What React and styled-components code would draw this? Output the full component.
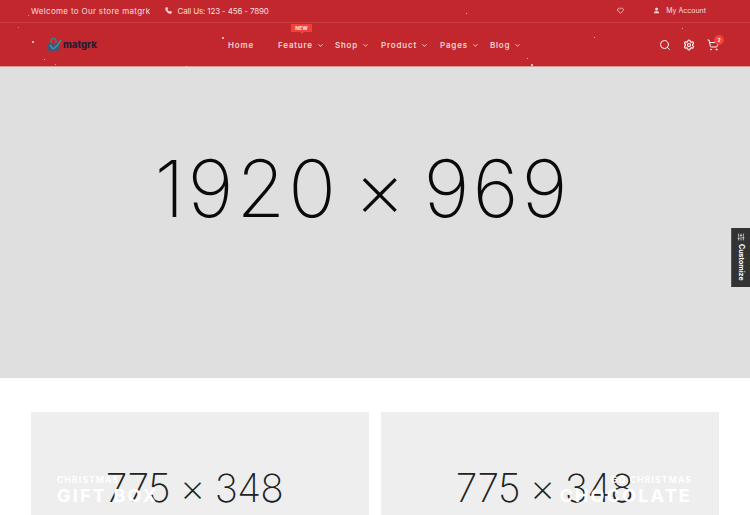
import React from "react";
import styled, { createGlobalStyle } from "styled-components";
import { Phone, Heart, User, Search, Settings, ShoppingCart, ChevronDown, SlidersHorizontal } from "lucide-react";

const Global = createGlobalStyle`
  html, body { margin: 0; padding: 0; background: #fff; }
  body { width: 750px; height: 515px; overflow: hidden; font-family: "Inter", "Liberation Sans", sans-serif; }
  * { box-sizing: border-box; }
`;
const Page = styled.div`position: relative; width: 750px; height: 515px; overflow: hidden;`;
const TopBar = styled.div`
  height: 23px; background: #c1272d; border-bottom: 1px solid #cc3d3f;
  display: flex; align-items: center; justify-content: space-between;
  padding: 0 44px 1px 31px; color: #f6dfe0; font-size: 8px;
`;
const TopGroup = styled.div`display: flex; align-items: center; gap: ${p => p.$gap}px;`;
const Welcome = styled.span`letter-spacing: .32px;`;
const CallItem = styled.span`display: inline-flex; align-items: center; gap: 6px; letter-spacing: -.15px;`;
const AccountItem = styled.span`display: inline-flex; align-items: center; gap: 6px; font-size: 7px;`;
const Header = styled.header`
  height: 44px; background: #c1272d; border-bottom: 1px solid #d9999b;
  display: grid; grid-template-columns: 228px 1fr auto; align-items: center;
  padding: 0 31px 0 0; color: #f7e3e3;
`;
const Logo = styled.div`display: flex; align-items: center; gap: 1px; padding-left: 47px;`;
const LogoText = styled.span`font: 800 9.5px "Inter", sans-serif; color: #221f33;`;
const Nav = styled.nav`display: flex; align-items: center; font-size: 8px; font-weight: 500; letter-spacing: .85px; padding-top: 1px;`;
const NavItem = styled.span`
  position: relative; display: inline-flex; align-items: center; gap: 4px;
  margin-right: ${p => p.$gap}px; white-space: nowrap;
`;
const NewBadge = styled.span`
  position: absolute; left: 13px; top: -16px; width: 21px; height: 8px; background: #f0413d; color: #fff;
  font-size: 5px; font-weight: 600; letter-spacing: .2px; display: flex; align-items: center; justify-content: center;
  &::after {
    content: ""; position: absolute; left: 50%; bottom: -2px; margin-left: -2px;
    border: 2px solid transparent; border-bottom: 0; border-top-color: #f0413d;
  }
`;
const Icons = styled.div`display: flex; align-items: center; gap: 12px; color: #fff;`;
const CartWrap = styled.span`position: relative; display: inline-flex;`;
const CartBadge = styled.span`
  position: absolute; right: -5px; top: -4px; width: 10px; height: 10px; border-radius: 50%;
  background: #f0413d; color: #fff; font-size: 5px; font-weight: 700; display: flex; align-items: center; justify-content: center;
`;
const Hero = styled.div`
  height: 311px; background: #dfdfdf; color: #0a0a0a; display: flex; align-items: center; justify-content: center;
  font: 200 79px "Inter", sans-serif; letter-spacing: 3px; word-spacing: -10px; padding: 0 25px 69px 0; white-space: nowrap;
`;
const Banners = styled.section`display: grid; grid-template-columns: 338px 338px; gap: 12px; padding: 34px 31px 0;`;
const Banner = styled.div`
  position: relative; height: 120px; background: #eeeeee; overflow: hidden; color: #222;
  font: 200 39px "Inter", sans-serif; letter-spacing: -.7px; white-space: nowrap;
  display: flex; justify-content: center; padding: 49px 11px 0 0; line-height: 54px;
`;
const Caption = styled.div`
  position: absolute; top: 63px; ${p => p.$right ? "right: 27px; text-align: right;" : "left: 26px;"}
  color: #fff; font-family: "Inter", sans-serif;
`;
const Small = styled.div`font-size: 8.5px; font-weight: 700; letter-spacing: 1.2px; line-height: 11px;`;
const Big = styled.div`font-size: 18px; font-weight: 700; letter-spacing: 2.2px; line-height: 22px; margin-top: -1px;`;
const Customize = styled.div`
  position: absolute; right: 0; top: 228px; width: 19px; height: 59px; background: #333; border-left: 1px solid #555;
  color: #fff; display: flex; flex-direction: column; align-items: center; gap: 3px; padding-top: 5px;
`;
const CustomizeText = styled.span`writing-mode: vertical-rl; font-size: 7px; font-weight: 700; line-height: 10px;`;
const Flake = styled.i`position: absolute; width: ${p => p.$s}px; height: ${p => p.$s}px; border-radius: 50%; background: #fff; opacity: ${p => p.$o};`;

const flakes = [[28,15,1,.7],[18,27,1,.5],[32,41,2,.9],[44,59,1,.9],[55,64,1,.7],[186,66,1,.8],[222,37,2,.9],[466,13,1,.9],[527,58,1,.9],[682,28,1,.8],[594,37,1,.8],[531,64,2,.9],[36,115,1,.5],[68,128,1,.5],[115,275,1,.5],[75,338,1,.4],[437,385,1,.6],[620,384,1,.6],[160,160,1,.5],[192,185,1,.5],[323,203,1,.5],[589,231,1,.6],[542,258,1,.4],[250,380,1,.4]];
const navs = [["Home",false,24],["Feature",true,11],["Shop",true,12],["Product",true,12],["Pages",true,11],["Blog",true,0]];

export default function App() {
  return (
    <Page>
      <Global />
      <TopBar>
        <TopGroup $gap={14}>
          <Welcome>Welcome to Our store matgrk</Welcome>
          <CallItem><Phone size={7} fill="currentColor" />Call Us: 123 - 456 - 7890</CallItem>
        </TopGroup>
        <TopGroup $gap={29}>
          <Heart size={7} strokeWidth={2.5} />
          <AccountItem><User size={7} fill="currentColor" />My Account</AccountItem>
        </TopGroup>
      </TopBar>
      <Header>
        <Logo>
          <svg width="15" height="14" viewBox="0 0 15 14" fill="none">
            <path d="M1 5h11l1 8H1z" fill="#2f5f82" opacity=".8" />
            <path d="M4 5V3a2.5 2.5 0 0 1 5 0v2" stroke="#2a8fa0" strokeWidth="1.2" />
            <path d="M3 7l3 4 4-3 4-6" stroke="#27a7a8" strokeWidth="1.3" />
            <path d="M2 12h10" stroke="#7a3c6a" strokeWidth="1.2" />
          </svg>
          <LogoText>matgrk</LogoText>
        </Logo>
        <Nav>
          {navs.map(([n, c, g]) => (
            <NavItem key={n} $gap={g}>
              {n === "Feature" && <NewBadge>NEW</NewBadge>}
              {n}{c && <ChevronDown size={7} strokeWidth={3} />}
            </NavItem>
          ))}
        </Nav>
        <Icons>
          <Search size={12} strokeWidth={2} />
          <Settings size={12} strokeWidth={2.2} />
          <CartWrap><ShoppingCart size={12} strokeWidth={2} /><CartBadge>2</CartBadge></CartWrap>
        </Icons>
      </Header>
      <Hero>1920 × 969</Hero>
      <Banners>
        <Banner>775 × 348<Caption><Small>CHRISTMAS</Small><Big>GIFT BOX</Big></Caption></Banner>
        <Banner>775 × 348<Caption $right><Small>GO CHRISTMAS</Small><Big>CHOCOLATE</Big></Caption></Banner>
      </Banners>
      <Customize><SlidersHorizontal size={8} style={{ transform: "rotate(90deg)" }} /><CustomizeText>Customize</CustomizeText></Customize>
      {flakes.map(([x, y, s, o], i) => <Flake key={i} $s={s} $o={o} style={{ left: x, top: y }} />)}
    </Page>
  );
}
